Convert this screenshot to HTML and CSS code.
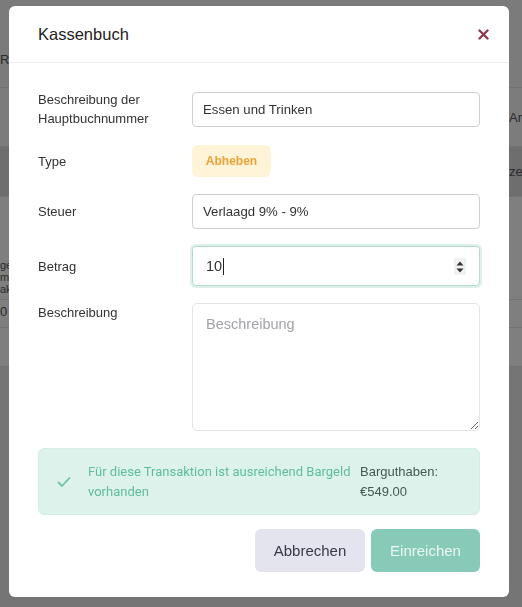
FILE: index.html
```html
<!DOCTYPE html>
<html lang="de">
<head>
    <meta charset="UTF-8">
    <meta name="viewport" content="width=device-width, initial-scale=1.0">
    <title>Kassenbuch</title>
    <link rel="stylesheet" href="styles.css">
</head>
<body>
    <!-- Seite hinter dem Dialog -->
    <div class="page">
        <div class="page-row row-a"><span class="cell-left">Re</span></div>
        <div class="page-row row-b"><span class="cell-right">Ar</span></div>
        <div class="page-row row-c"><span class="cell-right">ze</span></div>
        <div class="page-row row-d"><span class="cell-left stack">ge<br>m<br>ak</span></div>
        <div class="page-row row-e"><span class="cell-left">0</span></div>
        <div class="page-row row-f"></div>
    </div>

    <div class="overlay">
        <div class="modal">
            <div class="modal-header">
                <h2 class="modal-title">Kassenbuch</h2>
                <button class="close-btn" aria-label="Schließen">
                    <svg width="11" height="11" viewBox="0 0 11 11">
                        <path d="M1.5 1.5 L9.5 9.5 M9.5 1.5 L1.5 9.5" stroke="#8c3a4c" stroke-width="2.4" stroke-linecap="round"/>
                    </svg>
                </button>
            </div>

            <div class="modal-body">
                <div class="form-row">
                    <label class="form-label">Beschreibung der<br>Hauptbuchnummer</label>
                    <input class="form-input" type="text" value="Essen und Trinken">
                </div>

                <div class="form-row">
                    <label class="form-label">Type</label>
                    <div class="field"><span class="badge">Abheben</span></div>
                </div>

                <div class="form-row">
                    <label class="form-label">Steuer</label>
                    <input class="form-input" type="text" value="Verlaagd 9% - 9%">
                </div>

                <div class="form-row">
                    <label class="form-label">Betrag</label>
                    <div class="form-input number-input focused">
                        <span class="number-value">10</span><span class="caret"></span>
                        <span class="spinner">
                            <svg width="10" height="16" viewBox="0 0 10 16">
                                <path d="M1.5 6.5 L5 2.5 L8.5 6.5 Z" fill="#333"/>
                                <path d="M1.5 9.5 L5 13.5 L8.5 9.5 Z" fill="#333"/>
                            </svg>
                        </span>
                    </div>
                </div>

                <div class="form-row top">
                    <label class="form-label">Beschreibung</label>
                    <textarea class="form-textarea" placeholder="Beschreibung"></textarea>
                </div>

                <div class="alert">
                    <svg class="alert-icon" width="14" height="12" viewBox="0 0 14 12">
                        <path d="M1.5 6.5 L5 10 L12.5 2" fill="none" stroke="#6cc4a5" stroke-width="1.8" stroke-linecap="round" stroke-linejoin="round"/>
                    </svg>
                    <div class="alert-text">Für diese Transaktion ist ausreichend Bargeld vorhanden</div>
                    <div class="alert-balance">Barguthaben:<br>€549.00</div>
                </div>

                <div class="actions">
                    <button class="btn btn-cancel">Abbrechen</button>
                    <button class="btn btn-submit">Einreichen</button>
                </div>
            </div>
        </div>
    </div>
</body>
</html>
```

FILE: styles.css
```css
* {
    margin: 0;
    padding: 0;
    box-sizing: border-box;
    font-family: 'Liberation Sans', Arial, sans-serif;
}

body {
    width: 522px;
    height: 607px;
    overflow: hidden;
    background: #757575;
    color: #333;
}

/* Seite unter dem Overlay */
.page {
    display: flex;
    flex-direction: column;
    font-size: 13px;
    color: #2a2a2a;
}

.page-row {
    display: flex;
    align-items: center;
    border-bottom: 1px solid #727272;
}

.cell-right {
    margin-left: auto;
    width: 13px;
}

.stack {
    font-size: 11px;
    line-height: 12px;
}

.row-a { height: 88px; background: #7b7b7b; align-items: flex-start; padding-top: 52px; }
.row-b { height: 59px; background: #7c7c7c; }
.row-c { height: 50px; background: #6e6e6e; }
.row-d { height: 103px; background: #7f7f7f; align-items: flex-end; padding-bottom: 4px; }
.row-e { height: 28px; background: #7f7f7f; align-items: flex-start; padding-top: 4px; }
.row-f { height: 39px; background: #7f7f7f; }

.overlay {
    position: fixed;
    inset: 0;
    padding: 6px 0 0 9px;
}

.modal {
    width: 500px;
    height: 591px;
    background: #fff;
    border-radius: 6px;
    display: flex;
    flex-direction: column;
}

.modal-header {
    height: 57px;
    padding: 0 20px 0 29px;
    display: flex;
    align-items: center;
    justify-content: space-between;
    border-bottom: 1px solid #ececec;
}

.modal-title {
    font-size: 16.5px;
    font-weight: normal;
    color: #222;
}

.close-btn {
    background: none;
    border: none;
    width: 11px;
    height: 11px;
    display: flex;
}

.modal-body {
    padding: 27px 29px 0;
    display: flex;
    flex-direction: column;
    gap: 17px;
}

.form-row {
    display: flex;
    align-items: center;
}

.form-row.top {
    align-items: flex-start;
}

.form-label {
    width: 154px;
    flex-shrink: 0;
    font-size: 13px;
    line-height: 19px;
    color: #333;
}

.field {
    flex: 1;
}

.form-input {
    flex: 1;
    height: 35px;
    border: 1px solid #cfcfcf;
    border-radius: 4px;
    padding: 0 10px;
    font-size: 13.2px;
    color: #333;
    background: #fff;
    outline: none;
}

.number-input {
    height: 40px;
    display: flex;
    align-items: center;
    position: relative;
    padding: 0 13px;
    font-size: 14.5px;
}

.number-input.focused {
    border-color: #b3dccf;
    box-shadow: 0 0 0 2px #dcefe9;
}

.caret {
    width: 1px;
    height: 17px;
    background: #222;
    margin-left: 1px;
}

.spinner {
    position: absolute;
    right: 13px;
    top: 11px;
    width: 12px;
    height: 17px;
    background: #f1f1f1;
    display: flex;
    align-items: center;
    justify-content: center;
}

.badge {
    display: inline-flex;
    align-items: center;
    justify-content: center;
    width: 79px;
    height: 32px;
    border-radius: 6px;
    background: #fff4d7;
    color: #eba23a;
    font-size: 12px;
    font-weight: bold;
}

.form-textarea {
    flex: 1;
    height: 128px;
    border: 1px solid #e3e3e3;
    border-radius: 5px;
    padding: 12px 13px;
    font-size: 14.5px;
    resize: vertical;
    outline: none;
}

.form-textarea::placeholder {
    color: #a2a2a8;
}

.alert {
    display: flex;
    align-items: center;
    height: 67px;
    border: 1px solid #d3efe5;
    background: #ddf2eb;
    border-radius: 6px;
    padding: 0 20px 0 18px;
}

.alert-icon {
    flex-shrink: 0;
    margin-right: 17px;
}

.alert-text {
    flex: 1;
    font-family: Roboto, 'Liberation Sans', sans-serif;
    font-size: 13px;
    line-height: 20px;
    color: #5fbd9d;
}

.alert-balance {
    width: 100px;
    padding-left: 1px;
    font-size: 13px;
    line-height: 20px;
    color: #425a53;
}

.actions {
    display: flex;
    justify-content: flex-end;
    gap: 6px;
    margin-top: -3px;
}

.btn {
    height: 43px;
    border: none;
    border-radius: 6px;
    font-size: 15px;
    cursor: pointer;
}

.btn-cancel {
    width: 110px;
    background: #e3e4ee;
    color: #353a44;
}

.btn-submit {
    width: 109px;
    background: #87cab7;
    color: #ecf7f3;
}
```
